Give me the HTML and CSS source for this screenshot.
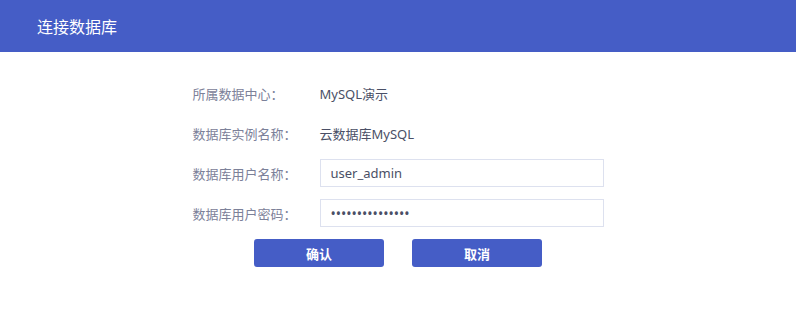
FILE: index.html
```html
<!DOCTYPE html>
<html lang="zh-CN">
<head>
    <meta charset="UTF-8">
    <meta name="viewport" content="width=device-width, initial-scale=1.0">
    <title>连接数据库</title>
    <link rel="stylesheet" href="styles.css">
</head>
<body>
    <div class="header">连接数据库</div>

    <div class="content">
        <div class="form">
            <div class="row">
                <label>所属数据中心：</label>
                <span class="value">MySQL演示</span>
            </div>
            <div class="row">
                <label>数据库实例名称：</label>
                <span class="value">云数据库MySQL</span>
            </div>
            <div class="row">
                <label>数据库用户名称：</label>
                <input type="text" class="field" value="user_admin">
            </div>
            <div class="row">
                <label>数据库用户密码：</label>
                <input type="password" class="field password" value="adminpassword12">
            </div>
        </div>
        <div class="actions">
            <button class="btn">确认</button>
            <button class="btn">取消</button>
        </div>
    </div>
</body>
</html>
```

FILE: styles.css
```css
body {
    margin: 0;
    font-family: "Noto Sans", "Noto Sans CJK SC", sans-serif;
    background: #fff;
    color: #4a4f66;
}

.header {
    height: 52px;
    line-height: 52px;
    padding-left: 37px;
    background-color: #455dc6;
    color: #fff;
    font-family: "Noto Sans CJK SC", sans-serif;
    font-size: 16px;
}

.content {
    padding-top: 27px;
}

.form {
    width: 411px;
    margin: 0 auto;
}

.row {
    display: flex;
    align-items: center;
    height: 28px;
    margin-bottom: 12px;
    font-size: 13px;
}

.row label {
    width: 127px;
    flex-shrink: 0;
    color: #7c8199;
    font-family: "Noto Sans CJK SC", sans-serif;
}

.value {
    color: #4a4f66;
}

.field {
    width: 284px;
    height: 28px;
    box-sizing: border-box;
    padding: 0 10px;
    border: 1px solid #dde1ef;
    border-radius: 0;
    outline: none;
    font-family: "Noto Sans", sans-serif;
    font-size: 13px;
    color: #4a4f66;
}

.password {
    font-size: 14px;
    letter-spacing: 0;
}

.actions {
    display: flex;
    justify-content: center;
    gap: 28px;
}

.btn {
    width: 130px;
    height: 28px;
    border: none;
    border-radius: 3px;
    background-color: #455dc6;
    color: #fff;
    font-family: "Noto Sans CJK SC", sans-serif;
    font-size: 13px;
    font-weight: bold;
    cursor: pointer;
}
```
